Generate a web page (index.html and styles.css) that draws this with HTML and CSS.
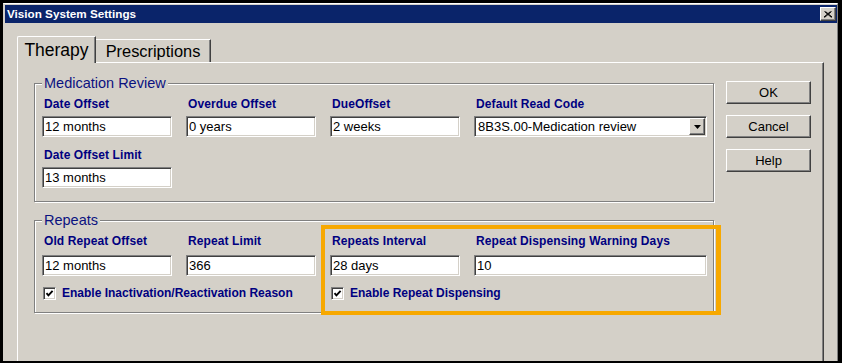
FILE: index.html
```html
<!DOCTYPE html>
<html>
<head>
<meta charset="utf-8">
<title>Vision System Settings</title>
<link rel="stylesheet" href="styles.css">
</head>
<body>
<div class="window">
  <div class="titlebar">
    <span class="title">Vision System Settings</span>
    <button class="close" aria-label="Close"><svg width="8" height="7" viewBox="0 0 8 7"><path d="M0.5 0.5L7.5 6.5M1.5 0.5L8 6M7.5 0.5L0.5 6.5M6.5 0.5L0 6" stroke="#000" stroke-width="1" fill="none"/></svg></button>
  </div>
  <div class="client">
    <div class="tabs">
      <div class="tab tab-active">Therapy</div>
      <div class="tab tab-inactive">Prescriptions</div>
    </div>
    <div class="panel">
      <div class="groups">
        <fieldset class="group group-med">
          <legend>Medication Review</legend>
          <div class="grid grid-med">
            <div class="field"><label>Date Offset</label><input class="textbox" type="text" value="12 months"></div>
            <div class="field"><label>Overdue Offset</label><input class="textbox" type="text" value="0 years"></div>
            <div class="field"><label>DueOffset</label><input class="textbox" type="text" value="2 weeks"></div>
            <div class="field"><label>Default Read Code</label>
              <div class="combo"><span class="combo-text">8B3S.00-Medication review</span><span class="combo-btn"><svg width="7" height="4" viewBox="0 0 7 4"><path d="M0 0H7L3.5 4Z" fill="#000"/></svg></span></div>
            </div>
            <div class="field"><label>Date Offset Limit</label><input class="textbox" type="text" value="13 months"></div>
          </div>
        </fieldset>
        <fieldset class="group group-rep">
          <legend>Repeats</legend>
          <div class="grid grid-rep">
            <div class="field"><label>Old Repeat Offset</label><input class="textbox" type="text" value="12 months"></div>
            <div class="field"><label>Repeat Limit</label><input class="textbox" type="text" value="366"></div>
            <div class="field"><label>Repeats Interval</label><input class="textbox" type="text" value="28 days"></div>
            <div class="field"><label>Repeat Dispensing Warning Days</label><input class="textbox" type="text" value="10"></div>
            <div class="checkrow"><span class="checkbox"><svg width="9" height="9" viewBox="0 0 9 9"><path d="M1.5 4.2L3.4 6.3L7.6 1.8" stroke="#000" stroke-width="1.9" fill="none"/></svg></span><span class="checklabel">Enable Inactivation/Reactivation Reason</span></div>
            <div class="checkrow"><span class="checkbox"><svg width="9" height="9" viewBox="0 0 9 9"><path d="M1.5 4.2L3.4 6.3L7.6 1.8" stroke="#000" stroke-width="1.9" fill="none"/></svg></span><span class="checklabel">Enable Repeat Dispensing</span></div>
          </div>
        </fieldset>
      </div>
      <div class="buttons">
        <button class="btn">OK</button>
        <button class="btn">Cancel</button>
        <button class="btn">Help</button>
      </div>
      <div class="highlight"></div>
    </div>
  </div>
</div>
</body>
</html>
```
FILE: styles.css
```css
* { box-sizing: border-box; }
html, body { margin: 0; padding: 0; }
body {
  background: #000;
  width: 842px;
  height: 363px;
  overflow: hidden;
  font-family: "Liberation Sans", Arial, sans-serif;
}
.window {
  margin: 3px 0 0 3px;
  width: 835px;
  height: 358px;
  background: #d4d0c8;
  border-top: 1px solid #ffffff;
  border-left: 1px solid #d4d0c8;
  border-right: 1px solid #808080;
  padding: 1px 0 0 1px;
  overflow: hidden;
}
.titlebar {
  height: 18px;
  background: #0a246a;
  display: flex;
  align-items: center;
  justify-content: space-between;
  padding: 0 1px 0 2px;
}
.title {
  color: #fff;
  font-weight: bold;
  font-size: 11.7px;
  line-height: 14px;
}
.close {
  width: 16px;
  height: 14px;
  padding: 0;
  margin: 0;
  background: #d4d0c8;
  border: 1px solid;
  border-color: #fff #404040 #404040 #fff;
  box-shadow: inset -1px -1px 0 #808080;
  display: flex;
  align-items: center;
  justify-content: center;
}
.close svg { display: block; }
.client {
  padding: 13px 13px 0 12px;
}
.tabs {
  display: flex;
  align-items: flex-end;
  height: 26px;
}
.tab {
  display: flex;
  align-items: center;
  justify-content: center;
  background: #d4d0c8;
  color: #000;
  border-top: 1px solid #fff;
  border-right: 1px solid #404040;
  box-shadow: inset -1px 0 0 #808080;
  white-space: nowrap;
}
.tab-active {
  position: relative;
  z-index: 1;
  width: 79px;
  height: 27px;
  margin-bottom: -1px;
  border-left: 1px solid #fff;
  border-top-left-radius: 2px;
  font-size: 17.5px;
  padding-top: 1px;
}
.tab-inactive {
  width: 115px;
  height: 23px;
  font-size: 16.4px;
  padding-top: 1px;
}
.panel {
  position: relative;
  display: flex;
  align-items: flex-start;
  height: 320px;
  border-top: 1px solid #fff;
  border-left: 1px solid #fff;
  border-right: 1px solid #404040;
  box-shadow: inset -1px 0 0 #808080;
  padding-left: 16px;
}
.groups {
  padding-top: 12px;
  width: 680px;
}
.group {
  margin: 0;
  min-width: 0;
  width: 680px;
  border: 1px solid #808080;
  box-shadow: 1px 1px 0 #fff, inset 1px 1px 0 #fff;
}
.group legend {
  padding: 0 2px;
  margin: 0;
  background: #d4d0c8;
  font-size: 14.5px;
  line-height: 16px;
  color: #0b1280;
}
.group-med {
  padding: 6px 6px 13px 7px;
}
.group-rep {
  margin-top: 10px;
  padding: 6px 6px 12px 7px;
}
.grid {
  display: grid;
  grid-template-columns: 130px 130px 130px 233px;
  column-gap: 14px;
}
.grid-med { row-gap: 11px; }
.grid-rep { row-gap: 10px; }
.field {
  display: flex;
  flex-direction: column;
}
.field label {
  font-weight: bold;
  font-size: 12px;
  line-height: 14px;
  padding-left: 2px;
  margin-bottom: 7px;
  color: #000080;
  letter-spacing: 0.1px;
  white-space: nowrap;
}
.grid-med .field label { margin-bottom: 5px; }
.textbox {
  width: 100%;
  height: 21px;
  margin: 0;
  border: 1px solid;
  border-color: #808080 #fff #fff #808080;
  box-shadow: inset 1px 1px 0 #404040, inset -1px -1px 0 #d4d0c8;
  background: #fff;
  font-family: "Liberation Sans", Arial, sans-serif;
  font-size: 13px;
  color: #000;
  padding: 0 0 0 2px;
  outline: none;
}
.combo {
  display: flex;
  align-items: stretch;
  height: 21px;
  border: 1px solid;
  border-color: #808080 #fff #fff #808080;
  box-shadow: inset 1px 1px 0 #404040, inset -1px -1px 0 #d4d0c8;
  background: #fff;
  padding: 1px;
}
.combo-text {
  flex: 1;
  font-size: 13px;
  line-height: 17px;
  padding-left: 2px;
  color: #000;
  white-space: nowrap;
}
.combo-btn {
  width: 16px;
  background: #d4d0c8;
  border: 1px solid;
  border-color: #fff #404040 #404040 #fff;
  box-shadow: inset -1px -1px 0 #808080;
  display: flex;
  align-items: center;
  justify-content: center;
}
.combo-btn svg { display: block; }
.checkrow {
  grid-column: span 2;
  display: flex;
  align-items: center;
  height: 14px;
  gap: 6px;
}
.checkbox {
  width: 13px;
  height: 13px;
  margin-left: 1px;
  border: 1px solid;
  border-color: #808080 #fff #fff #808080;
  box-shadow: inset 1px 1px 0 #404040, inset -1px -1px 0 #d4d0c8;
  background: #fff;
  display: flex;
  align-items: center;
  justify-content: center;
}
.checkbox svg { display: block; }
.checklabel {
  font-weight: bold;
  font-size: 12px;
  line-height: 14px;
  color: #000080;
  white-space: nowrap;
}
.buttons {
  display: flex;
  flex-direction: column;
  gap: 11px;
  padding-top: 18px;
  margin-left: 12px;
}
.btn {
  width: 85px;
  height: 23px;
  margin: 0;
  padding: 0;
  background: #d4d0c8;
  border: 1px solid;
  border-color: #fff #404040 #404040 #fff;
  box-shadow: inset -1px -1px 0 #808080;
  font-family: "Liberation Sans", Arial, sans-serif;
  font-size: 13px;
  color: #000;
}
.highlight {
  position: absolute;
  left: 303px;
  top: 162px;
  width: 400px;
  height: 90px;
  border: 4px solid #f7a800;
  border-right-width: 5px;
}
```
